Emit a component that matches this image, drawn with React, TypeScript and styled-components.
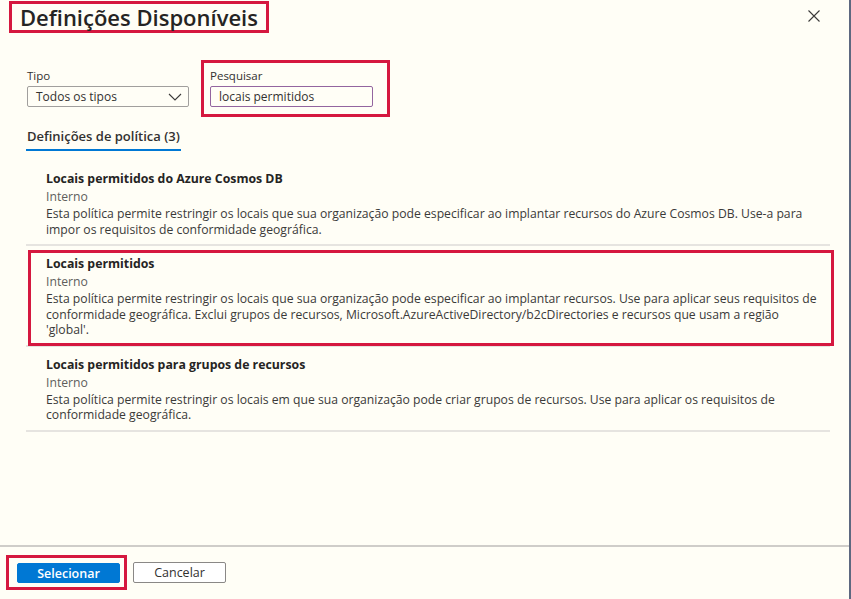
import React from 'react';
import styled, { createGlobalStyle } from 'styled-components';

const GlobalStyle = createGlobalStyle`
  html, body {
    margin: 0;
    padding: 0;
    background: #fffef6;
  }
  body {
    font-family: 'Open Sans', 'Noto Sans', sans-serif;
    color: #323130;
  }
`;

const Page = styled.div`
  width: 851px;
  height: 599px;
  box-sizing: border-box;
  border-right: 2px solid #5d6880;
  display: flex;
  flex-direction: column;
  background: #fffef6;
`;

const Header = styled.div`
  display: flex;
  justify-content: space-between;
  align-items: flex-start;
  padding: 1px 0 0 9px;
`;

const Marked = styled.div`
  border: 3px solid #d5183f;
`;

const TitleBox = styled(Marked)`
  height: 32px;
  box-sizing: border-box;
  padding: 0 8px;
  display: flex;
  align-items: center;
`;

const Title = styled.h1`
  margin: 0;
  font-size: 22px;
  font-weight: 600;
  color: #252423;
`;

const CloseButton = styled.button`
  border: none;
  background: none;
  padding: 0;
  margin: 8px 28px 0 0;
  width: 14px;
  height: 14px;
  cursor: pointer;
  display: flex;
`;

const Filters = styled.div`
  display: flex;
  align-items: flex-start;
  gap: 12px;
  padding-left: 27px;
  margin-top: 27px;
`;

const Field = styled.div`
  display: flex;
  flex-direction: column;
  padding-top: 8px;
`;

const SearchBox = styled(Marked)`
  display: flex;
  flex-direction: column;
  padding: 5px 14px 7px 6px;
`;

const Label = styled.label`
  font-size: 11.5px;
  line-height: 16px;
  margin-bottom: 2px;
  color: #323130;
`;

const Select = styled.div`
  width: 162px;
  height: 21px;
  box-sizing: border-box;
  border: 1px solid #a19f9d;
  border-radius: 2px;
  display: flex;
  align-items: center;
  justify-content: space-between;
  padding: 0 6px 0 8px;
  font-size: 12px;
  color: #323130;
`;

const Input = styled.div`
  width: 163px;
  height: 21px;
  box-sizing: border-box;
  border: 1px solid #93659f;
  border-radius: 2px;
  display: flex;
  align-items: center;
  padding: 0 8px;
  font-size: 12px;
  color: #323130;
`;

const Tab = styled.div`
  margin: 10px 0 0 26px;
  align-self: flex-start;
  font-size: 13px;
  font-weight: 600;
  line-height: 18px;
  padding: 0 1px 4px;
  border-bottom: 2px solid #0078d4;
  color: #323130;
`;

const List = styled.div`
  margin: 10px 0 0 26px;
  width: 804px;
  display: flex;
  flex-direction: column;
`;

const Item = styled.div<{ $marked?: boolean }>`
  position: relative;
  padding: 9px 0 7px 20px;
  border-bottom: 2px solid #e6e4e0;
  ${({ $marked }) =>
    $marked &&
    `
    &::after {
      content: '';
      position: absolute;
      top: 4px;
      left: 2px;
      right: -4px;
      bottom: -1px;
      border: 3px solid #d5183f;
      pointer-events: none;
    }
  `}
`;

const ItemTitle = styled.div`
  font-size: 12.3px;
  font-weight: 700;
  line-height: 18px;
  color: #252423;
`;

const ItemType = styled.div`
  font-size: 12.2px;
  line-height: 18px;
  color: #605e5c;
`;

const ItemDesc = styled.div`
  font-size: 12.2px;
  line-height: 15.5px;
  color: #3b3a39;
`;

const Spacer = styled.div`
  flex: 1;
`;

const Footer = styled.div`
  border-top: 2px solid #cfcdc9;
  padding: 8px 0 9px 6px;
  display: flex;
  align-items: flex-start;
  gap: 6px;
`;

const ButtonMark = styled(Marked)`
  padding: 5px 4px 4px 8px;
  display: flex;
`;

const Button = styled.button<{ $primary?: boolean }>`
  height: ${({ $primary }) => ($primary ? '20px' : '21px')};
  box-sizing: border-box;
  font-family: inherit;
  font-size: 12.5px;
  font-weight: ${({ $primary }) => ($primary ? 600 : 400)};
  border-radius: 2px;
  padding: 0;
  cursor: pointer;
  border: 1px solid ${({ $primary }) => ($primary ? '#0078d4' : '#8a8886')};
  background: ${({ $primary }) => ($primary ? '#0078d4' : '#ffffff')};
  color: ${({ $primary }) => ($primary ? '#ffffff' : '#323130')};
  width: ${({ $primary }) => ($primary ? '103px' : '93px')};
  margin-top: ${({ $primary }) => ($primary ? '0' : '7px')};
`;

const policies = [
  {
    id: 'cosmos',
    title: 'Locais permitidos do Azure Cosmos DB',
    lines: [
      'Esta política permite restringir os locais que sua organização pode especificar ao implantar recursos do Azure Cosmos DB. Use-a para',
      'impor os requisitos de conformidade geográfica.',
    ],
  },
  {
    id: 'locais',
    marked: true,
    title: 'Locais permitidos',
    lines: [
      'Esta política permite restringir os locais que sua organização pode especificar ao implantar recursos. Use para aplicar seus requisitos de',
      'conformidade geográfica. Exclui grupos de recursos, Microsoft.AzureActiveDirectory/b2cDirectories e recursos que usam a região',
      "'global'.",
    ],
  },
  {
    id: 'grupos',
    title: 'Locais permitidos para grupos de recursos',
    lines: [
      'Esta política permite restringir os locais em que sua organização pode criar grupos de recursos. Use para aplicar os requisitos de',
      'conformidade geográfica.',
    ],
  },
];

const App: React.FC = () => {
  return (
    <>
      <GlobalStyle />
      <Page>
        <Header>
          <TitleBox>
            <Title>Definições Disponíveis</Title>
          </TitleBox>
          <CloseButton aria-label="Fechar">
            <svg width="14" height="14" viewBox="0 0 14 14">
              <path d="M1.5 1.5 L12.5 12.5 M12.5 1.5 L1.5 12.5" stroke="#3b3a39" strokeWidth="1.1" />
            </svg>
          </CloseButton>
        </Header>

        <Filters>
          <Field>
            <Label>Tipo</Label>
            <Select>
              <span>Todos os tipos</span>
              <svg width="14" height="8" viewBox="0 0 14 8">
                <path d="M1 1 L7 7 L13 1" fill="none" stroke="#3b3a39" strokeWidth="1.1" />
              </svg>
            </Select>
          </Field>
          <SearchBox>
            <Label>Pesquisar</Label>
            <Input>locais permitidos</Input>
          </SearchBox>
        </Filters>

        <Tab>Definições de política (3)</Tab>

        <List>
          {policies.map((p) => (
            <Item key={p.id} $marked={p.marked}>
              <ItemTitle>{p.title}</ItemTitle>
              <ItemType>Interno</ItemType>
              <ItemDesc>
                {p.lines.map((line, i) => (
                  <div key={i}>{line}</div>
                ))}
              </ItemDesc>
            </Item>
          ))}
        </List>

        <Spacer />

        <Footer>
          <ButtonMark>
            <Button $primary>Selecionar</Button>
          </ButtonMark>
          <Button>Cancelar</Button>
        </Footer>
      </Page>
    </>
  );
};

export default App;
